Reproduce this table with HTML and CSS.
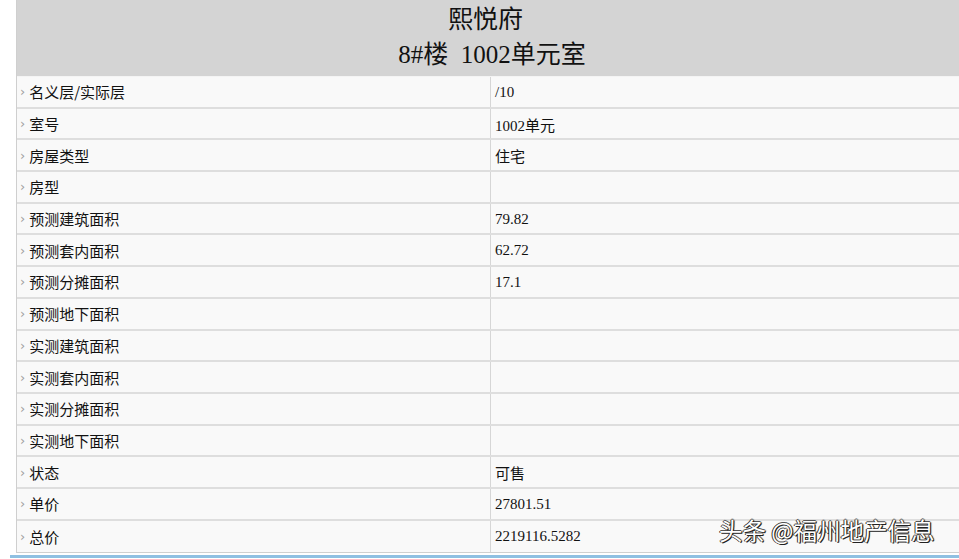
FILE: index.html
```html
<!DOCTYPE html>
<html lang="zh">
<head>
<meta charset="utf-8">
<link rel="stylesheet" href="styles.css">
</head>
<body>
<div class="page">
  <div class="sheet">
    <div class="head">
      <div class="title">熙悦府</div>
      <div class="sub">8#楼&nbsp;&nbsp;1002单元室</div>
    </div>
    <div class="rows">
      <div class="row"><div class="k">名义层/实际层</div><div class="v">/10</div></div>
      <div class="row"><div class="k">室号</div><div class="v">1002单元</div></div>
      <div class="row"><div class="k">房屋类型</div><div class="v">住宅</div></div>
      <div class="row"><div class="k">房型</div><div class="v"></div></div>
      <div class="row"><div class="k">预测建筑面积</div><div class="v">79.82</div></div>
      <div class="row"><div class="k">预测套内面积</div><div class="v">62.72</div></div>
      <div class="row"><div class="k">预测分摊面积</div><div class="v">17.1</div></div>
      <div class="row"><div class="k">预测地下面积</div><div class="v"></div></div>
      <div class="row"><div class="k">实测建筑面积</div><div class="v"></div></div>
      <div class="row"><div class="k">实测套内面积</div><div class="v"></div></div>
      <div class="row"><div class="k">实测分摊面积</div><div class="v"></div></div>
      <div class="row"><div class="k">实测地下面积</div><div class="v"></div></div>
      <div class="row"><div class="k">状态</div><div class="v">可售</div></div>
      <div class="row"><div class="k">单价</div><div class="v">27801.51</div></div>
      <div class="row"><div class="k">总价</div><div class="v">2219116.5282</div></div>
    </div>
  </div>
  <div class="blue"></div>
  <div class="mark">头条 @福州地产信息</div>
</div>
</body>
</html>
```
FILE: styles.css
```css
html, body {
  margin: 0;
  padding: 0;
  background: #ffffff;
}
.page {
  position: relative;
  width: 959px;
  height: 559px;
  overflow: hidden;
}
.sheet {
  margin-left: 16px;
  width: 960px;
  border-left: 1px solid #cfcfcf;
  border-bottom: 1px solid #d0d0d0;
}
.head {
  background: #d4d4d4;
  height: 76px;
  text-align: center;
  color: #111;
  font-family: "Liberation Serif", "Noto Sans CJK SC", serif;
  font-size: 25px;
  line-height: 38px;
  padding-right: 10px;
}
.title {
  font-family: "Noto Sans CJK SC", sans-serif;
  font-size: 25px;
  line-height: 34px;
  padding-right: 13px;
}
.sub {
  line-height: 42px;
}
.rows {
  border-top: 1px solid #f4f4f4;
}
.row {
  display: grid;
  grid-template-columns: 474px 1fr;
  height: 31.7px;
  box-sizing: border-box;
  border-bottom: 2px solid #dedede;
  background: #f9f9f9;
}
.row:last-child {
  border-bottom: none;
}
.k {
  display: flex;
  align-items: center;
  gap: 4px;
  padding-left: 3px;
  font-family: "Noto Sans CJK SC", sans-serif;
  font-size: 15px;
  color: #111;
  border-right: 1px solid #d6d6d6;
}
.k::before {
  content: "›";
  color: #a0a0a0;
  font-size: 13px;
  font-family: "DejaVu Sans", sans-serif;
}
.v {
  display: flex;
  align-items: center;
  padding-left: 4px;
  padding-top: 1px;
  font-family: "Liberation Serif", "Noto Sans CJK SC", serif;
  font-size: 15px;
  color: #111;
}
.blue {
  margin-top: 2px;
  margin-left: 10px;
  height: 3px;
  background: #8fc0e2;
}
.mark {
  position: absolute;
  left: 719px;
  top: 514px;
  font-family: "Noto Sans CJK SC", sans-serif;
  font-size: 23.5px;
  line-height: 32px;
  color: #ffffff;
  text-shadow: 1px 1px 0 #222, -1px 0 0 #333, 0 -1px 0 #555, 1px 0 1px #222;
  white-space: nowrap;
}
```
